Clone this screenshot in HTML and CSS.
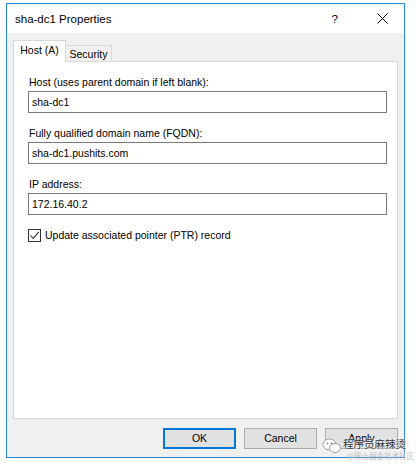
FILE: index.html
```html
<!DOCTYPE html>
<html>
<head>
<meta charset="utf-8">
<link rel="stylesheet" href="styles.css">
</head>
<body>
<div class="window">
  <div class="titlebar">
    <span class="title">sha-dc1 Properties</span>
    <span class="tb-help">?</span>
    <svg class="tb-close" width="11" height="11" viewBox="0 0 11 11"><path d="M0.5 0.5L10.5 10.5M10.5 0.5L0.5 10.5" stroke="#000" stroke-width="1"/></svg>
  </div>
  <div class="body">
    <div class="tabs">
      <div class="tab active">Host (A)</div>
      <div class="tab">Security</div>
    </div>
    <div class="panel">
      <div class="field">
        <div class="label">Host (uses parent domain if left blank):</div>
        <div class="input">sha-dc1</div>
      </div>
      <div class="field">
        <div class="label">Fully qualified domain name (FQDN):</div>
        <div class="input">sha-dc1.pushits.com</div>
      </div>
      <div class="field">
        <div class="label">IP address:</div>
        <div class="input">172.16.40.2</div>
      </div>
      <div class="check-row">
        <span class="checkbox"><svg width="11" height="11" viewBox="0 0 11 11"><path d="M1.5 5.5L4.2 8.5L9.8 1.8" fill="none" stroke="#222" stroke-width="1.1"/></svg></span>
        <span class="check-label">Update associated pointer (PTR) record</span>
      </div>
    </div>
    <div class="buttons">
      <div class="btn default">OK</div>
      <div class="btn">Cancel</div>
      <div class="btn">Apply</div>
    </div>
  </div>
</div>
<div class="watermark">
  <svg class="wm-icon" width="20" height="16" viewBox="0 0 20 16"><ellipse cx="7.5" cy="6.5" rx="6.5" ry="5.5" fill="#fff" stroke="#a0a0a0" stroke-width="1"/><ellipse cx="13" cy="10" rx="5.5" ry="4.5" fill="#fff" stroke="#a0a0a0" stroke-width="1"/><circle cx="5.5" cy="5.5" r="0.9" fill="#888"/><circle cx="9.5" cy="5.5" r="0.9" fill="#888"/></svg>
  <span class="wm-name">程序员麻辣烫</span>
  <span class="wm-sub">@稀土掘金技术社区</span>
</div>
</body>
</html>
```
FILE: styles.css
```css
html, body {
  margin: 0;
  padding: 0;
  background: #ffffff;
}
body {
  font-family: "Liberation Sans", Arial, sans-serif;
  font-size: 10.5px;
  color: #000;
  padding: 3px 0 0 6px;
  position: relative;
  height: 461px;
}
.window {
  width: 397px;
  height: 453px;
  border: 1px solid #2b88d8;
  display: flex;
  flex-direction: column;
  background: #f0f0f0;
}
.titlebar {
  height: 29px;
  background: #ffffff;
  display: flex;
  align-items: center;
  padding-left: 8px;
  flex: none;
}
.title {
  flex: 1;
  font-size: 11.5px;
}
.tb-help {
  font-size: 11.5px;
  margin-right: 39px;
}
.tb-close {
  margin-right: 16px;
}
.body {
  flex: 1;
  display: flex;
  flex-direction: column;
  padding: 8px 6px 8px 6px;
}
.tabs {
  display: flex;
  align-items: flex-end;
  height: 20px;
  position: relative;
  z-index: 1;
}
.tab {
  height: 15px;
  line-height: 16px;
  border: 1px solid #d9d9d9;
  border-bottom: none;
  background: #f0f0f0;
  width: 45px;
  text-align: center;
}
.tab.active {
  height: 21px;
  line-height: 19px;
  background: #ffffff;
  width: 51px;
  margin-bottom: -1px;
}
.tab + .tab {
  border-left: none;
}
.panel {
  height: 344px;
  border: 1px solid #d9d9d9;
  background: #ffffff;
  padding: 12px 10px 0 14px;
  flex: none;
}
.field {
  margin-bottom: 12px;
}
.label {
  line-height: 16px;
  margin-bottom: 1px;
  padding-left: 1px;
}
.input {
  height: 20px;
  line-height: 20px;
  border: 1px solid #7a7a7a;
  padding-left: 3px;
}
.check-row {
  display: flex;
  align-items: center;
  margin-top: 12px;
  line-height: 16px;
}
.checkbox {
  width: 11px;
  height: 11px;
  border: 1px solid #333;
  display: flex;
  margin-right: 4px;
}
.buttons {
  display: flex;
  justify-content: flex-end;
  gap: 8px;
  margin-top: 9px;
}
.btn {
  width: 71px;
  height: 19px;
  line-height: 19px;
  border: 1px solid #adadad;
  background: #e1e1e1;
  text-align: center;
}
.btn.default {
  width: 69px;
  height: 17px;
  line-height: 17px;
  border: 2px solid #0078d7;
}
.watermark {
  position: absolute;
  left: 322px;
  top: 436px;
  width: 94px;
  height: 27px;
}
.wm-icon {
  position: absolute;
  left: 0;
  top: 2px;
}
.wm-name {
  position: absolute;
  left: 21px;
  top: 0;
  line-height: 15px;
  font-family: "Noto Sans CJK SC", sans-serif;
  font-size: 10.5px;
  color: #333;
  text-shadow: 0 0 2px #fff, 0 0 2px #fff;
}
.wm-sub {
  position: absolute;
  left: 25px;
  top: 15px;
  line-height: 10px;
  font-family: "Noto Sans CJK SC", sans-serif;
  font-size: 7.5px;
  color: #c0c0c0;
}
```
